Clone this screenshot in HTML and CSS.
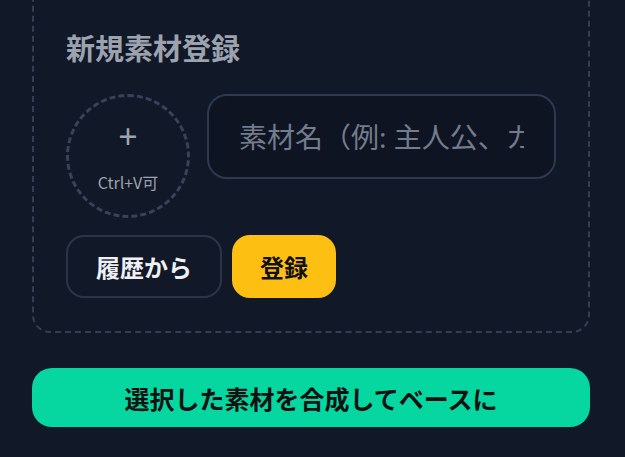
FILE: index.html
```html
<!DOCTYPE html>
<html lang="ja">
<head>
  <meta charset="UTF-8">
  <meta name="viewport" content="width=device-width, initial-scale=1.0">
  <title>素材登録</title>
  <link rel="stylesheet" href="styles.css">
</head>
<body>
  <div class="page">
    <div class="register-card">
      <h2>新規素材登録</h2>
      <div class="register-row">
        <div class="drop-circle">
          <span class="drop-plus">+</span>
          <span class="drop-hint">Ctrl+V可</span>
        </div>
        <input type="text" class="name-input" placeholder="素材名（例: 主人公、カフェ背景）">
      </div>
      <div class="btn-row">
        <button class="btn-history">履歴から</button>
        <button class="btn-register">登録</button>
      </div>
    </div>

    <button class="btn-compose">選択した素材を合成してベースに</button>
  </div>
</body>
</html>
```

FILE: styles.css
```css
body {
  margin: 0;
  background-color: #111827;
  font-family: "Noto Sans", "Noto Sans CJK JP", sans-serif;
  overflow: hidden;
}

.page {
  padding: 0 35px 0 32px;
}

.register-card {
  margin-top: -40px;
  padding: 67px 32px 33px 32px;
  border: 2px dashed #343e52;
  border-radius: 18px;
}

.register-card h2 {
  margin: 0 0 25px 0;
  font-size: 29px;
  line-height: 40px;
  font-weight: 700;
  color: #9ca3af;
}

.register-row {
  display: flex;
  align-items: flex-start;
  gap: 17px;
}

.drop-circle {
  flex: none;
  width: 118px;
  height: 118px;
  border: 3px dashed #384359;
  border-radius: 50%;
  display: flex;
  flex-direction: column;
  align-items: center;
  justify-content: center;
  color: #9ca3af;
}

.drop-plus {
  font-size: 34px;
  line-height: 30px;
  font-weight: 400;
}

.drop-hint {
  font-family: "Noto Sans CJK JP", sans-serif;
  font-size: 16px;
  line-height: 20px;
  margin-top: 21px;
}

.name-input {
  flex: 1;
  min-width: 0;
  height: 85px;
  box-sizing: border-box;
  padding: 0 30px;
  border: 2px solid #2e3950;
  border-radius: 20px;
  background-color: #0e1422;
  font-family: inherit;
  font-size: 28px;
  color: #e5e7eb;
  outline: none;
}

.name-input::placeholder {
  color: #737c8c;
}

.btn-row {
  display: flex;
  gap: 10px;
  margin-top: 17px;
}

.btn-row button {
  height: 63px;
  box-sizing: border-box;
  padding: 0 28px;
  border-radius: 18px;
  font-family: inherit;
  font-size: 24px;
  font-weight: 700;
  cursor: pointer;
}

.btn-history {
  background-color: transparent;
  border: 2px solid #2b3549;
  color: #eef0f4;
}

.btn-register {
  background-color: #fdbf12;
  border: none;
  color: #111111;
}

.btn-compose {
  display: block;
  width: 100%;
  height: 59px;
  margin-top: 35px;
  border: none;
  border-radius: 20px;
  background-color: #06d6a0;
  color: #111111;
  font-family: inherit;
  font-size: 25px;
  font-weight: 700;
  cursor: pointer;
}
```
